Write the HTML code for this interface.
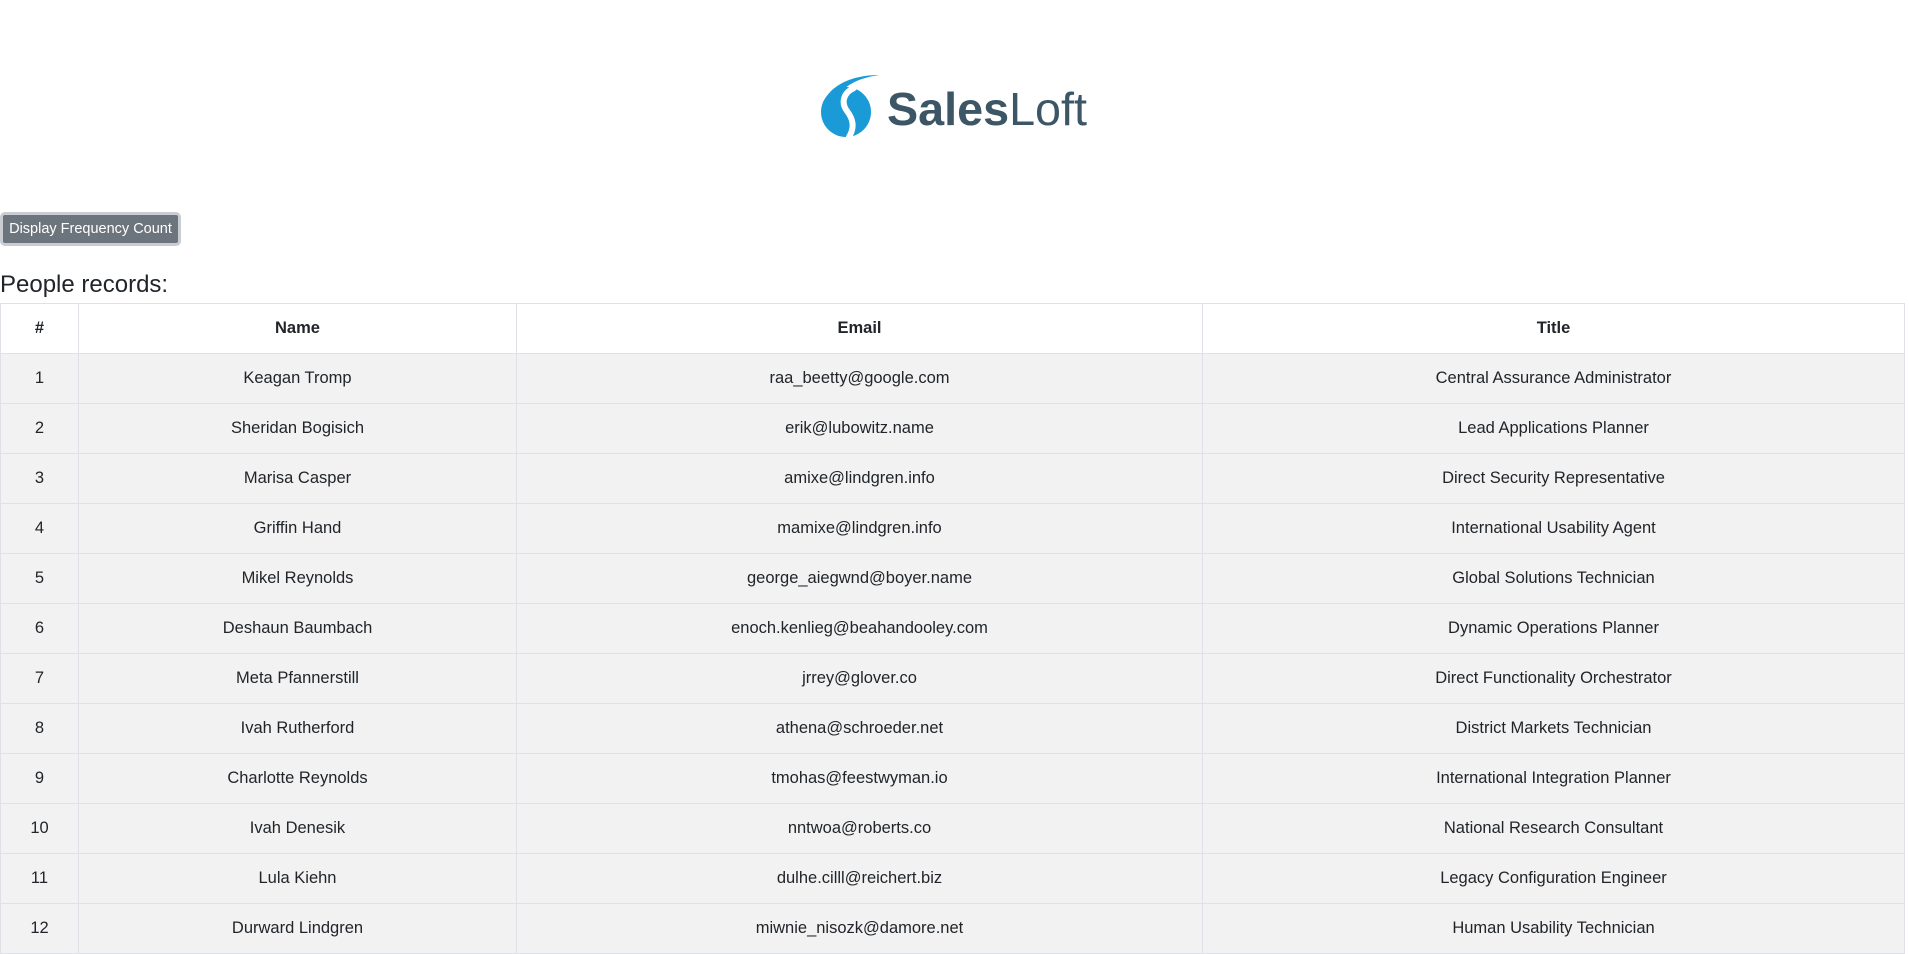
<!DOCTYPE html>
<html><head><meta charset="utf-8"><style>
body{margin:0;background:#fff;font-family:"Liberation Sans",sans-serif;color:#212529;width:1909px;height:939px;overflow:hidden;position:relative}
.logo{position:absolute;left:818px;top:72px}
.btn{position:absolute;left:0;top:212px;width:181px;height:34px;box-sizing:border-box;background:#6c757d;color:#fff;border:3px solid #c9ccd0;border-radius:5px;font-size:14.5px;line-height:28px;text-align:center}
h3{position:absolute;left:0;top:271px;margin:0;font-weight:400;font-size:24px}
table{position:absolute;left:0;top:303px;width:1905px;border-collapse:collapse;font-size:16.5px}
td,th{border:1.5px solid #dee2e6;height:49px;text-align:center;padding:0}
th{font-weight:700;background:#fff}
tbody td{background:#f2f2f2}
</style></head><body>
<svg class="logo" width="275" height="70" viewBox="0 0 275 70">
<circle cx="28" cy="40" r="25" fill="#1a9ad6"/>
<path d="M4 36 C8 15 32 3 61 3 C42 6 28 12 20 24 Z" fill="#1a9ad6"/>
<path d="M36 16 C25 21 23 31 29 39 C35 47 37 55 31 65" stroke="#fff" stroke-width="6" fill="none" stroke-linecap="round"/>
<text x="69" y="53" font-family="Liberation Sans, sans-serif" font-size="46" fill="#3d5665" textLength="200" lengthAdjust="spacingAndGlyphs"><tspan font-weight="700">Sales</tspan><tspan>Loft</tspan></text>
</svg>
<div class="btn">Display Frequency Count</div>
<h3>People records:</h3>
<table>
<colgroup><col style="width:78px"><col style="width:438px"><col style="width:686px"><col></colgroup>
<thead><tr><th>#</th><th>Name</th><th>Email</th><th>Title</th></tr></thead>
<tbody>
<tr><td>1</td><td>Keagan Tromp</td><td>raa_beetty@google.com</td><td>Central Assurance Administrator</td></tr>
<tr><td>2</td><td>Sheridan Bogisich</td><td>erik@lubowitz.name</td><td>Lead Applications Planner</td></tr>
<tr><td>3</td><td>Marisa Casper</td><td>amixe@lindgren.info</td><td>Direct Security Representative</td></tr>
<tr><td>4</td><td>Griffin Hand</td><td>mamixe@lindgren.info</td><td>International Usability Agent</td></tr>
<tr><td>5</td><td>Mikel Reynolds</td><td>george_aiegwnd@boyer.name</td><td>Global Solutions Technician</td></tr>
<tr><td>6</td><td>Deshaun Baumbach</td><td>enoch.kenlieg@beahandooley.com</td><td>Dynamic Operations Planner</td></tr>
<tr><td>7</td><td>Meta Pfannerstill</td><td>jrrey@glover.co</td><td>Direct Functionality Orchestrator</td></tr>
<tr><td>8</td><td>Ivah Rutherford</td><td>athena@schroeder.net</td><td>District Markets Technician</td></tr>
<tr><td>9</td><td>Charlotte Reynolds</td><td>tmohas@feestwyman.io</td><td>International Integration Planner</td></tr>
<tr><td>10</td><td>Ivah Denesik</td><td>nntwoa@roberts.co</td><td>National Research Consultant</td></tr>
<tr><td>11</td><td>Lula Kiehn</td><td>dulhe.cilll@reichert.biz</td><td>Legacy Configuration Engineer</td></tr>
<tr><td>12</td><td>Durward Lindgren</td><td>miwnie_nisozk@damore.net</td><td>Human Usability Technician</td></tr>
</tbody></table>
</body></html>
